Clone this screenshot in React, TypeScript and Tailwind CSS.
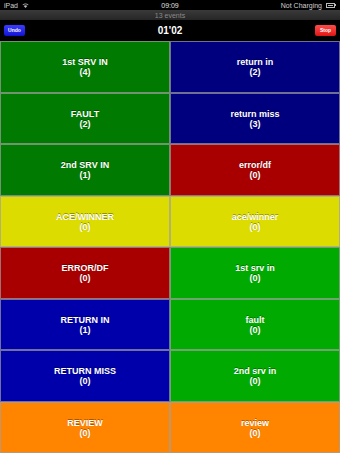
const cells = [
  { label: "1st SRV IN", count: 4, bg: "bg-[#007a00]" },
  { label: "return in", count: 2, bg: "bg-[#00007f]" },
  { label: "FAULT", count: 2, bg: "bg-[#007a00]" },
  { label: "return miss", count: 3, bg: "bg-[#00007f]" },
  { label: "2nd SRV IN", count: 1, bg: "bg-[#007a00]" },
  { label: "error/df", count: 0, bg: "bg-[#a80000]" },
  { label: "ACE/WINNER", count: 0, bg: "bg-[#dcdc00]" },
  { label: "ace/winner", count: 0, bg: "bg-[#dcdc00]" },
  { label: "ERROR/DF", count: 0, bg: "bg-[#a80000]" },
  { label: "1st srv in", count: 0, bg: "bg-[#00aa00]" },
  { label: "RETURN IN", count: 1, bg: "bg-[#0000aa]" },
  { label: "fault", count: 0, bg: "bg-[#00aa00]" },
  { label: "RETURN MISS", count: 0, bg: "bg-[#0000aa]" },
  { label: "2nd srv in", count: 0, bg: "bg-[#00aa00]" },
  { label: "REVIEW", count: 0, bg: "bg-[#ff8400]" },
  { label: "review", count: 0, bg: "bg-[#ff8400]" },
];

const StatusBar = () => (
  <div className="flex h-[10px] items-center justify-between bg-black px-1 text-[7px] leading-none text-[#d0d0d0]">
    <div className="flex w-20 items-center gap-1">
      <span>iPad</span>
      <svg width="7" height="5" viewBox="0 0 14 10" fill="#bbb">
        <path d="M7 10 L3.5 6.2 A5 5 0 0 1 10.5 6.2 Z M1 3.6 A9 9 0 0 1 13 3.6 L12 4.7 A7.5 7.5 0 0 0 2 4.7 Z" />
      </svg>
    </div>
    <span className="text-[#e0e0e0]">09:09</span>
    <div className="flex w-20 items-center justify-end gap-1">
      <span>Not Charging</span>
      <div className="flex items-center">
        <div className="h-[5px] w-[9px] border border-[#bbb] p-[1px]">
          <div className="h-full w-full bg-[#bbb]"></div>
        </div>
        <div className="h-[2px] w-[1px] bg-[#bbb]"></div>
      </div>
    </div>
  </div>
);

const App = () => {
  return (
    <div className="flex h-screen w-full flex-col overflow-hidden bg-black font-['Liberation_Sans',Arial,sans-serif]">
      <StatusBar />
      <div className="flex h-[10px] items-center justify-center bg-gradient-to-b from-[#3a3a3a] to-[#262626] text-[7px] leading-none text-[#8a8a8a]">
        13 events
      </div>
      <div className="flex h-[21px] items-center justify-between bg-black px-1">
        <button className="h-[11px] w-[21px] rounded-[2px] bg-gradient-to-b from-[#3b3bff] to-[#1010d0] text-[5px] font-bold leading-none text-white">
          Undo
        </button>
        <span className="text-[10px] font-bold text-white">01'02</span>
        <button className="h-[11px] w-[21px] rounded-[2px] bg-gradient-to-b from-[#ff4a4a] to-[#e01010] text-[5px] font-bold leading-none text-white">
          Stop
        </button>
      </div>
      <div className="grid flex-1 grid-cols-2 grid-rows-8">
        {cells.map((c) => (
          <div
            key={c.label}
            className={`flex flex-col items-center justify-center border border-[#a0a0a0]/70 pt-[1px] text-[9px] font-bold leading-[10px] text-white [text-shadow:0_-1px_0_rgba(0,0,0,0.35)] ${c.bg}`}
          >
            <span>{c.label}</span>
            <span>({c.count})</span>
          </div>
        ))}
      </div>
    </div>
  );
};

export default App;
